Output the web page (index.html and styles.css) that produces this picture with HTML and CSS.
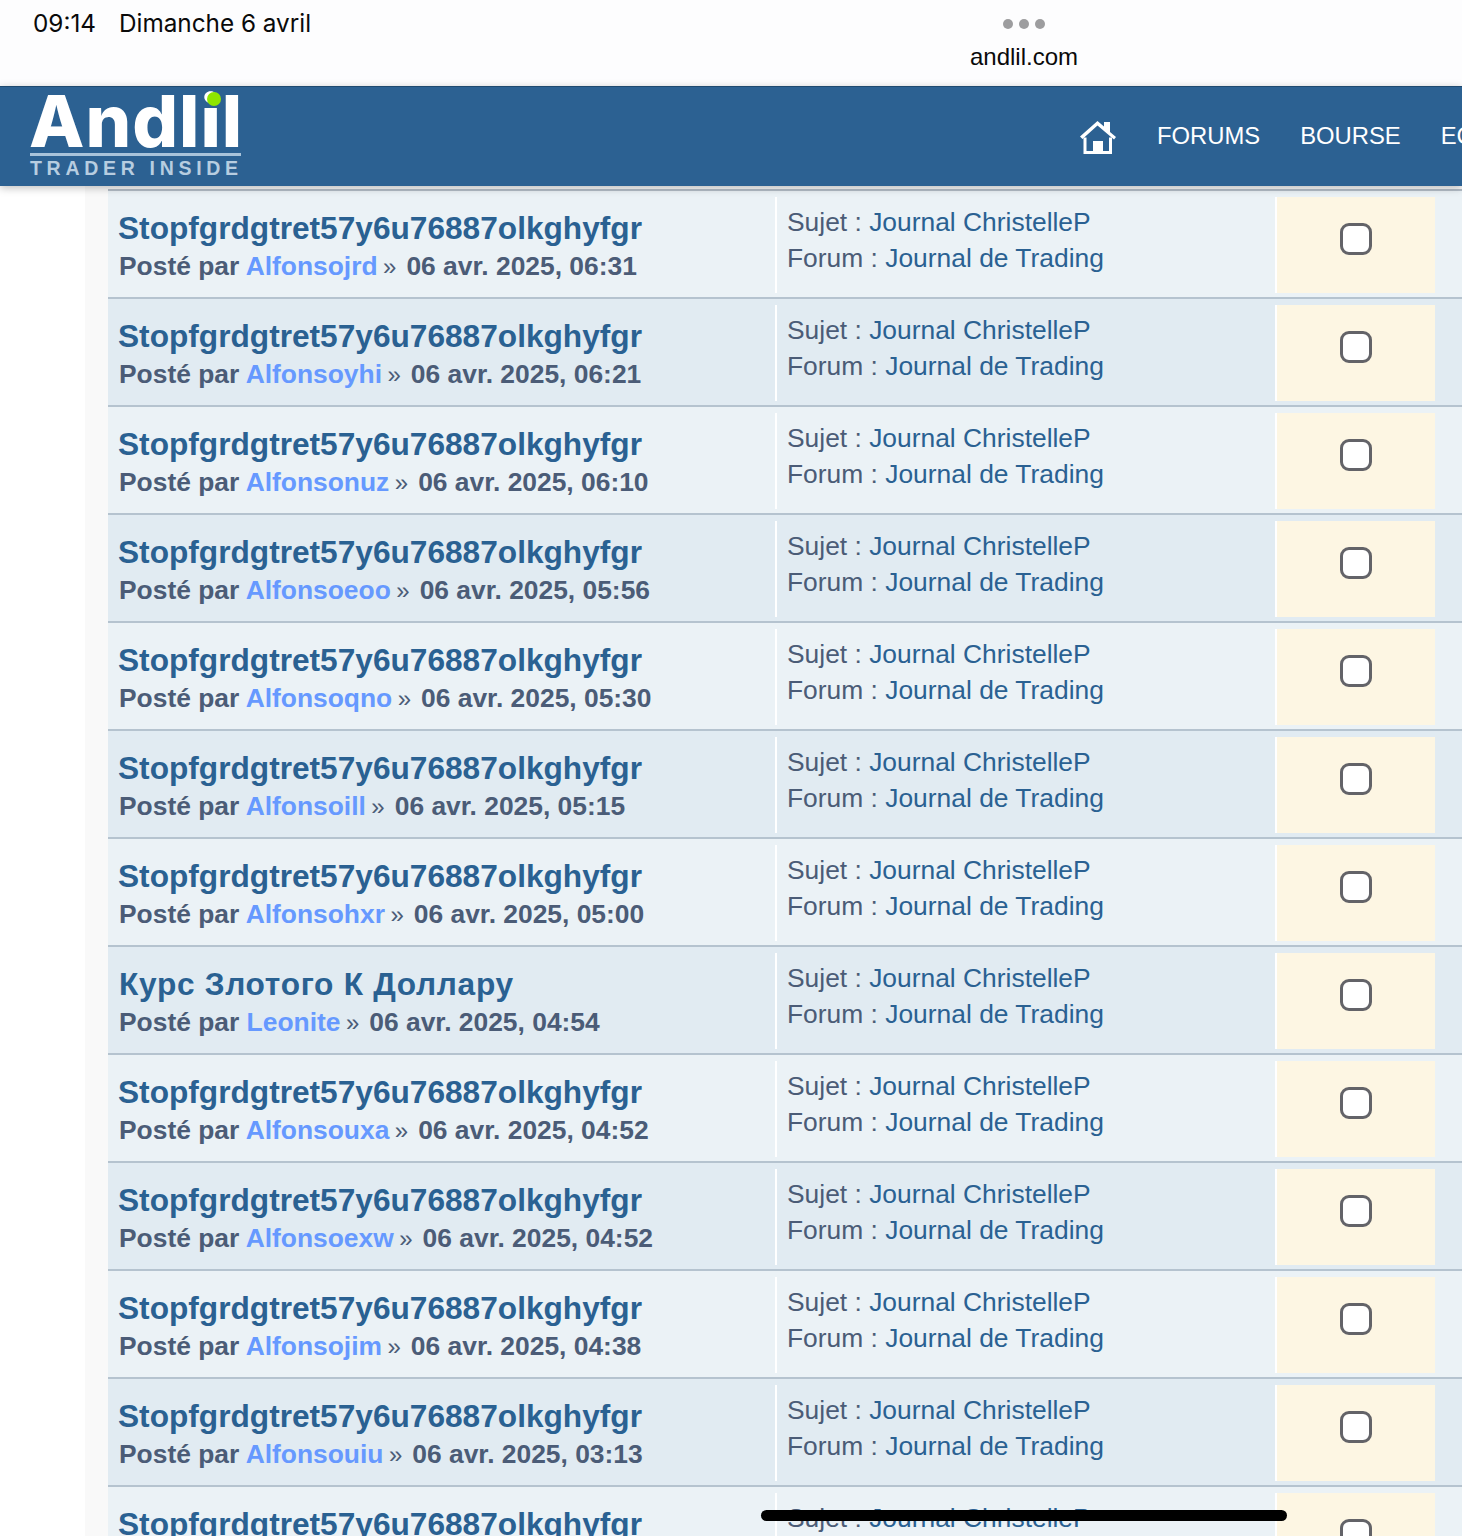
FILE: index.html
```html
<!DOCTYPE html>
<html lang="fr">
<head>
<meta charset="utf-8">
<title>Andlil</title>
<link rel="stylesheet" href="styles.css">
</head>
<body>
<div class="status">
  <div class="clock"><span class="time">09:14</span><span>Dimanche 6 avril</span></div>
  <div class="addr">
    <div class="dots"><i></i><i></i><i></i></div>
    <div class="url">andlil.com</div>
  </div>
</div>
<header class="head">
  <a class="logo">
    <span class="logo-name">Andlil</span>
    <span class="logo-dot"></span>
    <span class="logo-tag">TRADER INSIDE</span>
  </a>
  <nav class="nav">
    <svg class="home" viewBox="0 0 36 34" width="36" height="34"><path d="M0 16.500 17.500 1 24 6.500V2h6v10l6 5-2 2.500L17.500 5.500 2.500 19z" fill="#fff"/><path d="M5 17.500v15h25.500v-15" fill="none" stroke="#fff" stroke-width="3"/><rect x="13" y="21" width="10" height="10.500" fill="#fff"/></svg>
    <a>FORUMS</a><a>BOURSE</a><a>ECONOMIE</a>
  </nav>
</header>
<main class="page">
  <div class="gutter"></div>
  <div class="list" id="list">
    <div class="row"><div class="main"><a class="title">Stopfgrdgtret57y6u76887olkghyfgr</a><div class="by">Posté par <a class="user">Alfonsojrd</a><span class="sep">»</span>06 avr. 2025, 06:31</div></div><div class="meta"><div>Sujet : <a>Journal ChristelleP</a></div><div>Forum : <a>Journal de Trading</a></div></div><div class="mark"><input type="checkbox" class="box"></div></div>
    <div class="row alt"><div class="main"><a class="title">Stopfgrdgtret57y6u76887olkghyfgr</a><div class="by">Posté par <a class="user">Alfonsoyhi</a><span class="sep">»</span>06 avr. 2025, 06:21</div></div><div class="meta"><div>Sujet : <a>Journal ChristelleP</a></div><div>Forum : <a>Journal de Trading</a></div></div><div class="mark"><input type="checkbox" class="box"></div></div>
    <div class="row"><div class="main"><a class="title">Stopfgrdgtret57y6u76887olkghyfgr</a><div class="by">Posté par <a class="user">Alfonsonuz</a><span class="sep">»</span>06 avr. 2025, 06:10</div></div><div class="meta"><div>Sujet : <a>Journal ChristelleP</a></div><div>Forum : <a>Journal de Trading</a></div></div><div class="mark"><input type="checkbox" class="box"></div></div>
    <div class="row alt"><div class="main"><a class="title">Stopfgrdgtret57y6u76887olkghyfgr</a><div class="by">Posté par <a class="user">Alfonsoeoo</a><span class="sep">»</span>06 avr. 2025, 05:56</div></div><div class="meta"><div>Sujet : <a>Journal ChristelleP</a></div><div>Forum : <a>Journal de Trading</a></div></div><div class="mark"><input type="checkbox" class="box"></div></div>
    <div class="row"><div class="main"><a class="title">Stopfgrdgtret57y6u76887olkghyfgr</a><div class="by">Posté par <a class="user">Alfonsoqno</a><span class="sep">»</span>06 avr. 2025, 05:30</div></div><div class="meta"><div>Sujet : <a>Journal ChristelleP</a></div><div>Forum : <a>Journal de Trading</a></div></div><div class="mark"><input type="checkbox" class="box"></div></div>
    <div class="row alt"><div class="main"><a class="title">Stopfgrdgtret57y6u76887olkghyfgr</a><div class="by">Posté par <a class="user">Alfonsoill</a><span class="sep">»</span>06 avr. 2025, 05:15</div></div><div class="meta"><div>Sujet : <a>Journal ChristelleP</a></div><div>Forum : <a>Journal de Trading</a></div></div><div class="mark"><input type="checkbox" class="box"></div></div>
    <div class="row"><div class="main"><a class="title">Stopfgrdgtret57y6u76887olkghyfgr</a><div class="by">Posté par <a class="user">Alfonsohxr</a><span class="sep">»</span>06 avr. 2025, 05:00</div></div><div class="meta"><div>Sujet : <a>Journal ChristelleP</a></div><div>Forum : <a>Journal de Trading</a></div></div><div class="mark"><input type="checkbox" class="box"></div></div>
    <div class="row alt"><div class="main"><a class="title title-cy">Курс Злотого К Доллару</a><div class="by">Posté par <a class="user">Leonite</a><span class="sep">»</span>06 avr. 2025, 04:54</div></div><div class="meta"><div>Sujet : <a>Journal ChristelleP</a></div><div>Forum : <a>Journal de Trading</a></div></div><div class="mark"><input type="checkbox" class="box"></div></div>
    <div class="row"><div class="main"><a class="title">Stopfgrdgtret57y6u76887olkghyfgr</a><div class="by">Posté par <a class="user">Alfonsouxa</a><span class="sep">»</span>06 avr. 2025, 04:52</div></div><div class="meta"><div>Sujet : <a>Journal ChristelleP</a></div><div>Forum : <a>Journal de Trading</a></div></div><div class="mark"><input type="checkbox" class="box"></div></div>
    <div class="row alt"><div class="main"><a class="title">Stopfgrdgtret57y6u76887olkghyfgr</a><div class="by">Posté par <a class="user">Alfonsoexw</a><span class="sep">»</span>06 avr. 2025, 04:52</div></div><div class="meta"><div>Sujet : <a>Journal ChristelleP</a></div><div>Forum : <a>Journal de Trading</a></div></div><div class="mark"><input type="checkbox" class="box"></div></div>
    <div class="row"><div class="main"><a class="title">Stopfgrdgtret57y6u76887olkghyfgr</a><div class="by">Posté par <a class="user">Alfonsojim</a><span class="sep">»</span>06 avr. 2025, 04:38</div></div><div class="meta"><div>Sujet : <a>Journal ChristelleP</a></div><div>Forum : <a>Journal de Trading</a></div></div><div class="mark"><input type="checkbox" class="box"></div></div>
    <div class="row alt"><div class="main"><a class="title">Stopfgrdgtret57y6u76887olkghyfgr</a><div class="by">Posté par <a class="user">Alfonsouiu</a><span class="sep">»</span>06 avr. 2025, 03:13</div></div><div class="meta"><div>Sujet : <a>Journal ChristelleP</a></div><div>Forum : <a>Journal de Trading</a></div></div><div class="mark"><input type="checkbox" class="box"></div></div>
    <div class="row"><div class="main"><a class="title">Stopfgrdgtret57y6u76887olkghyfgr</a></div><div class="meta"><div>Sujet : <a>Journal ChristelleP</a></div></div><div class="mark"><input type="checkbox" class="box"></div></div>
  </div>
</main>
<div class="homebar"></div>
</body>
</html>
```
FILE: styles.css
```css
* { box-sizing: border-box; }
html, body { margin: 0; padding: 0; }
body { width: 1462px; height: 1536px; overflow: hidden; background: #fff; font-family: "Liberation Sans", Arial, sans-serif; position: relative; }
.status { height: 86px; background: #fdfdfe; display: flex; color: #0a0a0a; }
.clock { width: 1024px; padding: 9px 0 0 33px; font-family: Inter, "Liberation Sans", sans-serif; font-size: 24.300px; line-height: 28px; display: flex; gap: 23px; }
.addr { position: absolute; left: 924px; width: 200px; top: 0; display: flex; flex-direction: column; align-items: center; }
.dots { display: flex; gap: 6px; margin-top: 19px; }
.dots i { width: 10px; height: 10px; border-radius: 50%; background: #9d9d9f; }
.url { font-size: 24px; line-height: 28px; margin-top: 14px; }
.head { height: 100px; background: #2c6192; border-top: 1px solid #1f4a70; display: flex; justify-content: space-between; position: relative; z-index: 2; box-shadow: 0 2px 8px rgba(0,0,0,.25); overflow: hidden; }
.logo { position: relative; width: 211px; height: 87px; margin: 5px 0 0 30px; color: #fff; display: block; }
.logo-name { position: absolute; left: -1px; top: 0; font-family: Inter, sans-serif; font-weight: 800; font-size: 72px; line-height: 58px; letter-spacing: 1px; }
.logo-dot { position: absolute; left: 177px; top: 0; width: 14px; height: 14px; border-radius: 50%; background: #8fe600; }
.logo-tag { position: absolute; left: 0; right: 0; top: 61px; border-top: 3px solid #a9c3da; padding-top: 2px; font-size: 19.500px; line-height: 20px; font-weight: 700; letter-spacing: 4.700px; color: #b7cde0; white-space: nowrap; }
.nav { display: flex; align-items: center; gap: 40px; width: 382px; flex: none; white-space: nowrap; color: #fff; font-size: 23.800px; padding-bottom: 2px; }
.home { margin: 2px 1px 0 0; flex: none; }
.page { display: flex; height: 1350px; }
.gutter { width: 85px; flex: none; }
.list { flex: 1; background: #f9f9f9; padding: 3px 0 0 23px; }
.list::before { content: ""; display: block; height: 2px; background: #b4bec8; }
.row { height: 108px; background: #ebf2f6; border-bottom: 2px solid #b5c3cf; display: flex; }
.row.alt { background: #e1ebf2; }
.main { width: 667px; padding: 17px 0 0 10px; flex: none; }
.title { display: block; color: #2a6192; font-size: 31.650px; font-weight: 700; line-height: 40px; white-space: nowrap; }
.title-cy { letter-spacing: .7px; margin-left: 1px; }
.by { color: #4b5c77; font-size: 26.400px; font-weight: 700; line-height: 36px; white-space: nowrap; margin-left: 1px; }
.user { color: #6699ff; }
.sep { font-weight: 400; font-size: 24px; margin: 0 10px 0 5.500px; }
.meta { width: 500px; margin: 6px 0; height: 96px; border-left: 2px solid #fff; padding: 7px 0 0 10px; color: #4b5c77; font-size: 26.400px; line-height: 36px; flex: none; }
.meta a { color: #2a6192; }
.mark { width: 160px; margin: 6px 0; height: 96px; padding-bottom: 12px; background: #fdf6e3; border-left: 2px solid #fff; flex: none; display: flex; justify-content: center; align-items: center; }
.box { appearance: none; -webkit-appearance: none; margin: 0; width: 32px; height: 32px; border: 3px solid #636368; border-radius: 9px; background: #fff; }
.homebar { position: absolute; left: 761px; top: 1510px; width: 526px; height: 11px; border-radius: 6px; background: #000; z-index: 5; }
```
